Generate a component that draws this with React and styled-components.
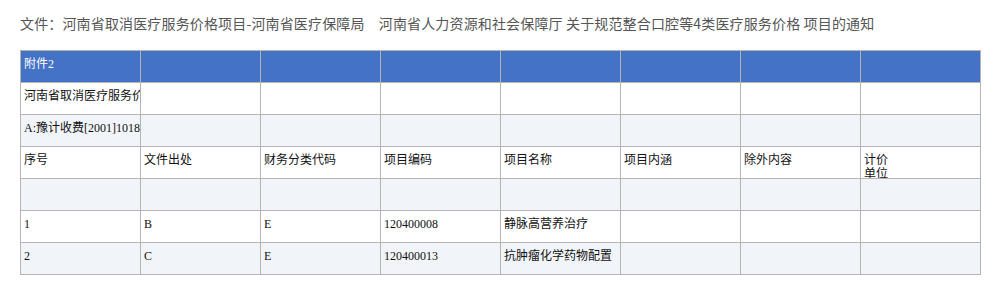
import React from "react";
import styled, { createGlobalStyle } from "styled-components";

const GlobalStyle = createGlobalStyle`
  html, body {
    margin: 0;
    padding: 0;
    background: #fff;
  }
`;

const Page = styled.div`
  padding: 13px 20px 0;
  font-family: "Noto Sans CJK SC", "Noto Sans", sans-serif;
`;

const Title = styled.div`
  font-size: 14px;
  line-height: 20px;
  letter-spacing: 0.15px;
  color: #555;
  white-space: nowrap;
  margin-bottom: 17px;
`;

const Table = styled.table`
  border-collapse: collapse;
  table-layout: fixed;
  font-family: "Liberation Serif", "Noto Sans CJK SC", serif;
  font-size: 12px;
  color: #111;
`;

const Row = styled.tr`
  background: ${({ $tone }) =>
    $tone === "head" ? "#4472c4" : $tone === "alt" ? "#f1f5f9" : "#fff"};
  color: ${({ $tone }) => ($tone === "head" ? "#fff" : "#111")};
`;

const Cell = styled.td`
  width: 119px;
  padding: 0;
  border: 1px solid #b4b4b4;
  vertical-align: top;
`;

const CellText = styled.div`
  box-sizing: border-box;
  width: 119px;
  height: 31px;
  padding: 6px 3px 0;
  line-height: 14px;
  overflow: hidden;
  white-space: nowrap;
`;

const rows = [
  { tone: "head", cells: ["附件2"] },
  { tone: "plain", cells: ["河南省取消医疗服务价格项目"] },
  { tone: "alt", cells: ["A:豫计收费[2001]1018号"] },
  {
    tone: "plain",
    cells: ["序号", "文件出处", "财务分类代码", "项目编码", "项目名称", "项目内涵", "除外内容", ["计价", "单位"]],
  },
  { tone: "alt", cells: [] },
  { tone: "plain", cells: ["1", "B", "E", "120400008", "静脉高营养治疗"] },
  { tone: "alt", cells: ["2", "C", "E", "120400013", "抗肿瘤化学药物配置"] },
];

export default function App() {
  return (
    <Page>
      <GlobalStyle />
      <Title>
        文件：河南省取消医疗服务价格项目-河南省医疗保障局　河南省人力资源和社会保障厅 关于规范整合口腔等4类医疗服务价格 项目的通知
      </Title>
      <Table>
        <tbody>
          {rows.map((row, i) => (
            <Row key={i} $tone={row.tone}>
              {Array.from({ length: 8 }).map((_, j) => {
                const c = row.cells[j];
                return (
                  <Cell key={j}>
                    <CellText>
                      {Array.isArray(c) ? (
                        <>
                          {c[0]}
                          <br />
                          {c[1]}
                        </>
                      ) : (
                        c
                      )}
                    </CellText>
                  </Cell>
                );
              })}
            </Row>
          ))}
        </tbody>
      </Table>
    </Page>
  );
}
